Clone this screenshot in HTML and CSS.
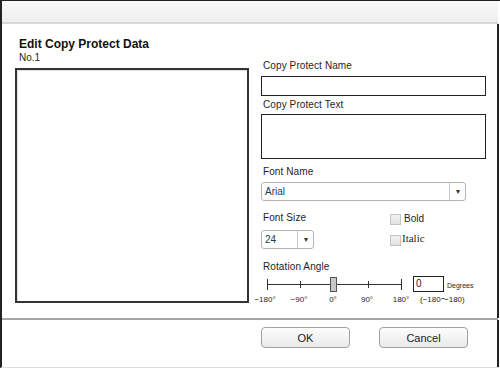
FILE: index.html
```html
<!DOCTYPE html>
<html lang="en">
<head>
    <meta charset="UTF-8">
    <title>Edit Copy Protect Data</title>
    <link rel="stylesheet" href="styles.css">
</head>
<body>
    <div class="window">
        <div class="titlebar"></div>
        <div class="content">
            <div class="left">
                <h1>Edit Copy Protect Data</h1>
                <div class="number">No.1</div>
                <div class="preview"></div>
            </div>
            <div class="right">
                <div class="label first">Copy Protect Name</div>
                <div class="textbox"></div>
                <div class="label">Copy Protect Text</div>
                <div class="textbox area"></div>
                <div class="label font-name">Font Name</div>
                <div class="select wide">
                    <span class="select-value">Arial</span>
                    <span class="select-arrow">&#9662;</span>
                </div>
                <div class="size-row">
                    <div class="size-group">
                        <div class="label">Font Size</div>
                        <div class="select small">
                            <span class="select-value">24</span>
                            <span class="select-arrow">&#9662;</span>
                        </div>
                    </div>
                    <div class="checks">
                        <div class="check"><span class="box"></span><span>Bold</span></div>
                        <div class="check italic"><span class="box"></span><span>Italic</span></div>
                    </div>
                </div>
                <div class="label rotation">Rotation Angle</div>
                <div class="slider-row">
                    <svg class="slider" width="151" height="18" viewBox="0 0 151 18">
                        <line x1="6" y1="8.5" x2="141" y2="8.5" stroke="#333" stroke-width="1"/>
                        <line x1="6.5" y1="3" x2="6.5" y2="14" stroke="#333"/>
                        <line x1="39.5" y1="5" x2="39.5" y2="12" stroke="#333"/>
                        <line x1="107.5" y1="5" x2="107.5" y2="12" stroke="#333"/>
                        <line x1="140.5" y1="3" x2="140.5" y2="14" stroke="#333"/>
                        <rect x="69.5" y="1.5" width="6" height="14" fill="#c8c8c8" stroke="#555"/>
                    </svg>
                    <div class="degree-input">0</div>
                    <span class="degrees">Degrees</span>
                </div>
                <div class="scale-row">
                    <span class="tick">&minus;180&deg;</span>
                    <span class="tick">&minus;90&deg;</span>
                    <span class="tick">0&deg;</span>
                    <span class="tick">90&deg;</span>
                    <span class="tick">180&deg;</span>
                    <span class="range">(&minus;180〜180)</span>
                </div>
            </div>
        </div>
        <div class="separator"></div>
        <div class="footer">
            <button class="button">OK</button>
            <button class="button">Cancel</button>
        </div>
    </div>
</body>
</html>
```

FILE: styles.css
```css
body {
    margin: 0;
    font-family: "Liberation Sans", Arial, "Noto Sans CJK JP", sans-serif;
    color: #1e1e1e;
    background: #fff;
}
.window {
    width: 498px;
    height: 366px;
    border-top: 1px solid #222;
    border-left: 2px solid #222;
    border-bottom: 1px solid #dcdcdc;
    background: #fff;
    overflow: hidden;
}
.titlebar {
    height: 21px;
    margin-right: 2px;
    background: linear-gradient(#f9f9f9, #efefef);
    border-bottom: 2px solid #d6d9d9;
}
.content {
    display: flex;
    height: 294px;
    margin-right: 1px;
    border-right: 2px solid #222;
}
.left {
    width: 234px;
    margin-left: 13px;
    padding-top: 13px;
}
h1 {
    margin: 0 0 0 4px;
    font-size: 12px;
    line-height: 14px;
    font-weight: bold;
    color: #111;
}
.number {
    margin: 1px 0 0 4px;
    font-size: 10px;
    line-height: 12px;
}
.preview {
    height: 231px;
    margin-top: 4px;
    border: 2px solid #333;
    box-shadow: inset 1px 1px 0 #e2e2e2;
}
.right {
    width: 225px;
    margin-left: 12px;
    padding-top: 35px;
}
.label {
    font-size: 10px;
    line-height: 13px;
    padding-left: 2px;
    margin-top: 2px;
    letter-spacing: 0.1px;
}
.label.first {
    margin-top: 0;
}
.textbox {
    height: 18px;
    margin-top: 4px;
    border: 1px solid #222;
}
.textbox.area {
    height: 43px;
    margin-top: 3px;
}
.label.font-name {
    margin-top: 6px;
}
.select {
    display: flex;
    height: 17px;
    margin-top: 4px;
    border: 1px solid #b4b4b4;
    border-radius: 3px;
    background: #fff;
    font-size: 10px;
}
.select.wide {
    width: 203px;
}
.select.small {
    width: 51px;
    margin-top: 6px;
}
.select-value {
    flex: 1;
    padding-left: 3px;
    line-height: 17px;
    color: #1b3c4b;
}
.select-arrow {
    width: 15px;
    border-left: 1px solid #c8c8c8;
    text-align: center;
    font-size: 8px;
    line-height: 17px;
    color: #333;
}
.size-row {
    display: flex;
    margin-top: 10px;
}
.size-group {
    width: 129px;
}
.size-group .label {
    margin-top: 0;
}
.checks {
    padding-top: 2px;
}
.check {
    display: flex;
    align-items: flex-start;
    height: 20px;
    font-size: 10px;
    line-height: 11px;
}
.check .box {
    width: 9px;
    height: 9px;
    margin-top: 1px;
    margin-right: 3px;
    border: 1px solid #c4c4c4;
    background: linear-gradient(#f2f2f2, #e2e2e2);
}
.check.italic {
    font-family: "Liberation Serif", "Times New Roman", serif;
    font-size: 11px;
}
.check.italic .box {
    margin-top: 2px;
    margin-right: 1px;
}
.label.rotation {
    margin-top: 7px;
}
.slider-row {
    display: flex;
    align-items: flex-start;
    height: 18px;
    margin-top: 3px;
}
.degree-input {
    width: 27px;
    height: 14px;
    margin-left: 1px;
    padding-left: 2px;
    border: 1px solid #222;
    font-size: 10px;
    line-height: 14px;
}
.degrees {
    margin-left: 3px;
    font-size: 7px;
    line-height: 20px;
}
.scale-row {
    display: flex;
    margin-left: -13px;
    margin-top: 1px;
    font-size: 8px;
    line-height: 9px;
}
.tick {
    width: 34px;
    text-align: center;
}
.range {
    margin-left: 2px;
}
.separator {
    height: 2px;
    margin-right: 2px;
    background: #a5a5a5;
}
.footer {
    display: flex;
    gap: 29px;
    height: 47px;
    margin-right: 1px;
    padding-left: 259px;
    padding-top: 7px;
    box-sizing: border-box;
    border-right: 2px solid #222;
}
.button {
    width: 89px;
    height: 21px;
    padding: 0;
    border: 1px solid #a0a0a0;
    border-radius: 4px;
    background: linear-gradient(#fdfdfd, #e9e9e9);
    font-family: "Liberation Sans", Arial, sans-serif;
    font-size: 11px;
    color: #222;
}
```
